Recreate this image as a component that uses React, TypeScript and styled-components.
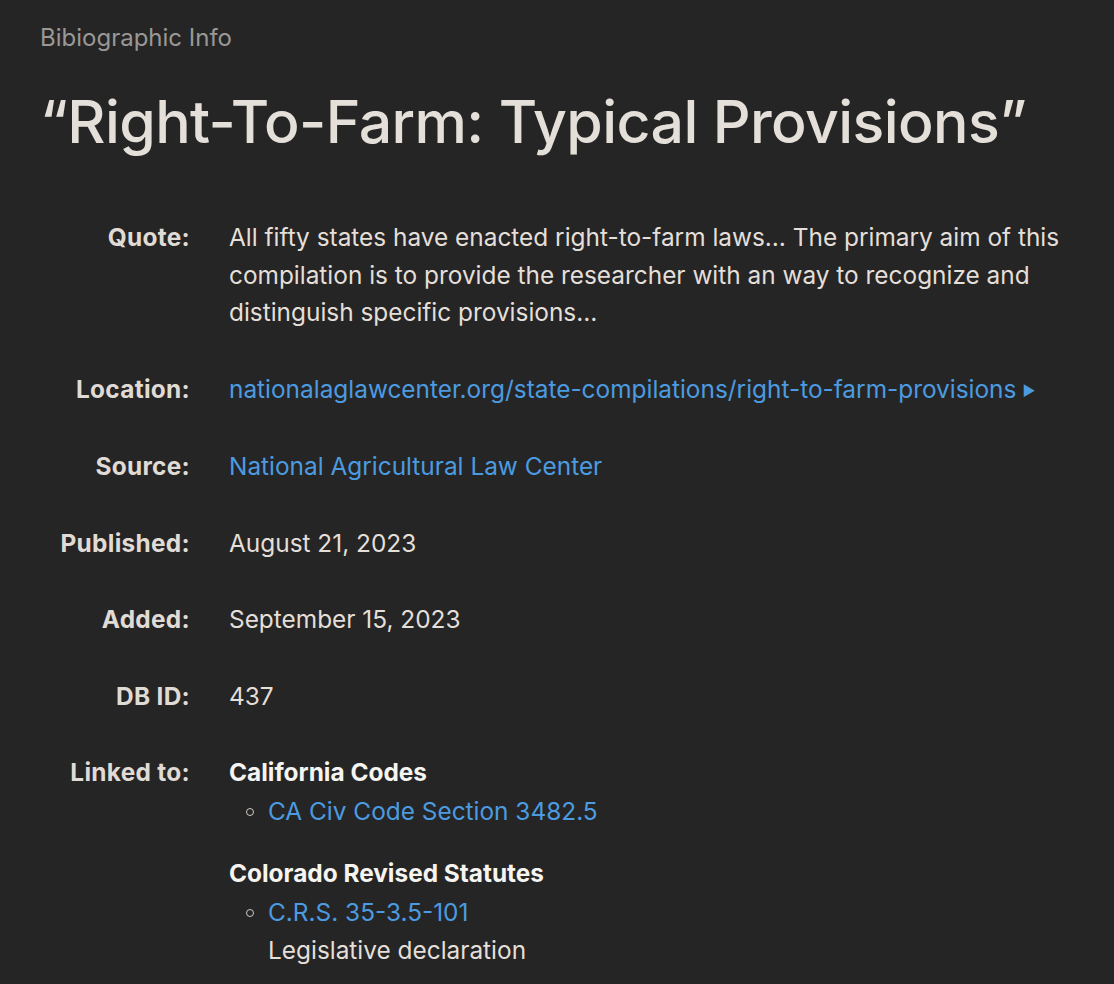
import React from 'react';
import styled, { createGlobalStyle } from 'styled-components';

const GlobalStyle = createGlobalStyle`
  html, body {
    margin: 0;
    padding: 0;
    background: #252525;
  }
  body {
    font-family: Inter, "Noto Sans", "Liberation Sans", sans-serif;
    color: #e4dfd8;
  }
`;

const Page = styled.div`
  min-height: 100vh;
  padding: 22px 40px 40px;
  box-sizing: border-box;
  background: #252525;
`;

const Kicker = styled.div`
  font-size: 24px;
  line-height: 32px;
  color: #9a9895;
`;

const Title = styled.h1`
  margin: 32px 0 61px;
  font-size: 59px;
  line-height: 72px;
  font-weight: 500;
  color: #e4dfd8;
  letter-spacing: -0.6px;
`;

const InfoGrid = styled.dl`
  display: grid;
  grid-template-columns: 150px 1fr;
  column-gap: 39px;
  row-gap: 39px;
  margin: 0;
  font-size: 24.4px;
  line-height: 37.5px;
`;

const Label = styled.dt`
  text-align: right;
  font-weight: 700;
  letter-spacing: 0.3px;
  color: #e0dbd4;
`;

const Value = styled.dd`
  margin: 0;
  color: #e4dfd8;
`;

const Link = styled.a`
  color: #4c9be0;
  text-decoration: none;
`;

const Arrow = styled.span`
  font-size: 14px;
  margin-left: 6px;
  vertical-align: 2px;
`;

const GroupTitle = styled.div<{ $first?: boolean }>`
  font-weight: 700;
  color: #f6f4f0;
  margin-top: ${(p) => (p.$first ? '0' : '25px')};
`;

const CodeList = styled.ul`
  list-style: none;
  margin: 0;
  padding: 0 0 0 39px;
`;

const CodeItem = styled.li`
  position: relative;
  line-height: 38.5px;
  &::before {
    content: '';
    position: absolute;
    left: -22px;
    top: 16px;
    width: 6px;
    height: 6px;
    border: 1.5px solid #cfcac3;
    border-radius: 50%;
  }
`;

const rows = [
  { label: 'Published:', value: 'August 21, 2023' },
  { label: 'Added:', value: 'September 15, 2023' },
  { label: 'DB ID:', value: '437' },
];

const linked = [
  {
    group: 'California Codes',
    items: [{ code: 'CA Civ Code Section 3482.5' }],
  },
  {
    group: 'Colorado Revised Statutes',
    items: [{ code: 'C.R.S. 35-3.5-101', note: 'Legislative declaration' }],
  },
];

export default function App() {
  return (
    <Page>
      <GlobalStyle />
      <Kicker>Bibiographic Info</Kicker>
      <Title>“Right-To-Farm: Typical Provisions”</Title>
      <InfoGrid>
        <Label>Quote:</Label>
        <Value>
          All fifty states have enacted right-to-farm laws… The primary aim of this compilation is to provide the
          researcher with an way to recognize and distinguish specific provisions…
        </Value>

        <Label>Location:</Label>
        <Value>
          <Link href="#">
            nationalaglawcenter.org/state-compilations/right-to-farm-provisions
            <Arrow>▶</Arrow>
          </Link>
        </Value>

        <Label>Source:</Label>
        <Value>
          <Link href="#">National Agricultural Law Center</Link>
        </Value>

        {rows.map((r) => (
          <React.Fragment key={r.label}>
            <Label>{r.label}</Label>
            <Value>{r.value}</Value>
          </React.Fragment>
        ))}

        <Label>Linked to:</Label>
        <Value>
          {linked.map((g, i) => (
            <div key={g.group}>
              <GroupTitle $first={i === 0}>{g.group}</GroupTitle>
              <CodeList>
                {g.items.map((it) => (
                  <CodeItem key={it.code}>
                    <Link href="#">{it.code}</Link>
                    {it.note && <div>{it.note}</div>}
                  </CodeItem>
                ))}
              </CodeList>
            </div>
          ))}
        </Value>
      </InfoGrid>
    </Page>
  );
}
